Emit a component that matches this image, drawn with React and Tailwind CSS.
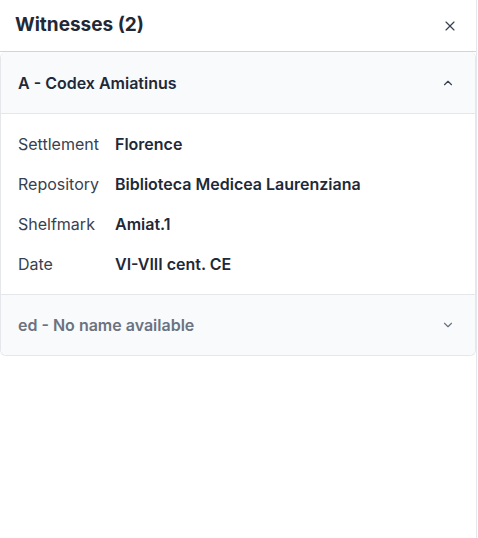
import { X, ChevronUp, ChevronDown } from 'lucide-react';

const rows = [
  { label: 'Settlement', value: 'Florence' },
  { label: 'Repository', value: 'Biblioteca Medicea Laurenziana' },
  { label: 'Shelfmark', value: 'Amiat.1' },
  { label: 'Date', value: 'VI-VIII cent. CE' },
];

export default function App() {
  return (
    <div className="h-[538px] w-[477px] border-r border-[#e5e7eb] bg-white font-['Inter',sans-serif] text-[#1f2937]">
      <div className="flex h-[52px] items-center justify-between border-b border-[#d1d5db] bg-white pl-[15px] pr-[18px]">
        <h2 className="text-[19px] font-bold text-[#1f2937]">Witnesses (2)</h2>
        <X size={16} strokeWidth={1.75} className="text-[#374151]" />
      </div>

      <div className="overflow-hidden rounded-md border border-t-0 border-[#e5e7eb]">
        <div className="flex h-[61px] items-center justify-between bg-[#f8fafc] pl-[17px] pr-[20px]">
          <span className="text-[16px] font-semibold text-[#1f2937]">A - Codex Amiatinus</span>
          <ChevronUp size={14} strokeWidth={2} className="text-[#374151]" />
        </div>
        <div className="border-t border-[#e5e7eb] bg-white px-[17px] py-[10px]">
          {rows.map((r) => (
            <div key={r.label} className="flex h-[40px] items-center text-[16px]">
              <span className="w-[97px] text-[#374151]">{r.label}</span>
              <span className="font-semibold text-[#1f2937]">{r.value}</span>
            </div>
          ))}
        </div>
        <div className="flex h-[61px] items-center justify-between border-t border-[#e5e7eb] bg-[#f8fafc] pl-[17px] pr-[20px]">
          <span className="text-[16px] font-semibold text-[#6b7280]">ed - No name available</span>
          <ChevronDown size={14} strokeWidth={2} className="text-[#6b7280]" />
        </div>
      </div>
    </div>
  );
}
